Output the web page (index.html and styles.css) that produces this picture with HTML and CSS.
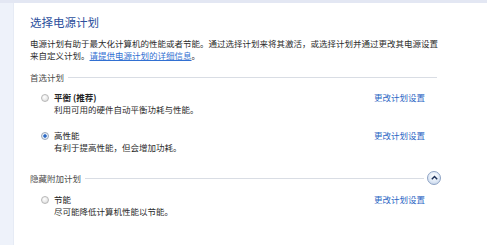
FILE: index.html
```html
<!DOCTYPE html>
<html lang="zh-CN">
<head>
<meta charset="utf-8">
<title>选择电源计划</title>
<link rel="stylesheet" href="styles.css">
</head>
<body>
<div class="topbar"></div>
<div class="frame">
  <div class="sidebar"></div>
  <div class="main">
    <h1 class="title">选择电源计划</h1>
    <p class="intro">电源计划有助于最大化计算机的性能或者节能。通过选择计划来将其激活，或选择计划并通过更改其电源设置<br>来自定义计划。<a class="link underline" href="#">请提供电源计划的详细信息</a>。</p>

    <div class="section-head">
      <span class="section-label">首选计划</span>
      <span class="rule rule-first"></span>
    </div>

    <div class="plan">
      <span class="radio"></span>
      <div class="plan-text">
        <div class="plan-name bold">平衡 (推荐)</div>
        <div class="plan-desc">利用可用的硬件自动平衡功耗与性能。</div>
      </div>
      <a class="link plan-link" href="#">更改计划设置</a>
    </div>

    <div class="plan">
      <span class="radio checked"></span>
      <div class="plan-text">
        <div class="plan-name">高性能</div>
        <div class="plan-desc">有利于提高性能，但会增加功耗。</div>
      </div>
      <a class="link plan-link" href="#">更改计划设置</a>
    </div>

    <div class="section-head second">
      <span class="section-label">隐藏附加计划</span>
      <span class="rule"></span>
      <span class="collapse">
        <svg width="7" height="5" viewBox="0 0 7 5"><path d="M0.8 4.2 L3.5 1.4 L6.2 4.2" fill="none" stroke="#1b2f57" stroke-width="1.4"/></svg>
      </span>
    </div>

    <div class="plan">
      <span class="radio"></span>
      <div class="plan-text">
        <div class="plan-name">节能</div>
        <div class="plan-desc">尽可能降低计算机性能以节能。</div>
      </div>
      <a class="link plan-link" href="#">更改计划设置</a>
    </div>
  </div>
</div>
</body>
</html>
```

FILE: styles.css
```css
html, body {
  margin: 0;
  padding: 0;
  background: #ffffff;
}
body {
  width: 487px;
  height: 245px;
  overflow: hidden;
  font-family: "Noto Sans CJK SC", "Noto Sans", sans-serif;
  color: #2c2c2c;
  font-size: 8.5px;
  line-height: 12px;
}
.topbar {
  height: 3px;
  background: #e3e7f3;
}
.frame {
  display: flex;
  height: 242px;
}
.sidebar {
  width: 13px;
  background: #eef2fa;
  border-right: 1px solid #e6ebf5;
}
.main {
  flex: 1;
  padding: 12px 46px 0 16px;
}
.title {
  margin: 0;
  font-size: 11.5px;
  line-height: 14px;
  font-weight: normal;
  color: #2b4f9c;
}
.intro {
  margin: 8px 0 0 0;
  white-space: nowrap;
}
.link {
  color: #2a66c4;
  text-decoration: none;
}
.underline {
  text-decoration: underline;
  color: #3270d2;
}
.section-head {
  display: flex;
  align-items: center;
  margin-top: 10px;
  color: #4a4a4a;
}
.section-head.second {
  margin-top: 18px;
}
.section-label {
  margin-right: 4px;
}
.rule {
  flex: 1;
  height: 1px;
  background: #d9dde4;
}
.rule-first {
  margin-right: 4px;
}
.collapse {
  width: 12px;
  height: 12px;
  margin-left: 3px;
  border-radius: 50%;
  border: 1px solid #8ea3c4;
  background: radial-gradient(circle at 50% 35%, #ffffff 0%, #dfe9f6 55%, #b9cbe3 100%);
  display: flex;
  align-items: center;
  justify-content: center;
}
.collapse svg {
  margin-top: -1px;
}
.plan {
  display: flex;
  align-items: flex-start;
  margin-top: 8px;
  padding-left: 11px;
}
.plan + .plan {
  margin-top: 14px;
}
.radio {
  width: 6px;
  height: 6px;
  margin-top: 3px;
  margin-right: 5px;
  border-radius: 50%;
  border: 1px solid #b8b8b8;
  background: radial-gradient(circle at 40% 35%, #ffffff 0%, #e8e8e8 60%, #cfcfcf 100%);
  flex: none;
}
.radio.checked {
  border-color: #9aa6b8;
  background: radial-gradient(circle, #1f58b4 0%, #3c79d0 35%, #e4ebf5 45%, #f4f6fa 100%);
}
.plan-text {
  flex: 1;
}
.plan-name {
  color: #222222;
}
.bold {
  font-weight: bold;
}
.plan-desc {
  color: #2c2c2c;
}
.plan-link {
  margin-right: 16px;
}
```
